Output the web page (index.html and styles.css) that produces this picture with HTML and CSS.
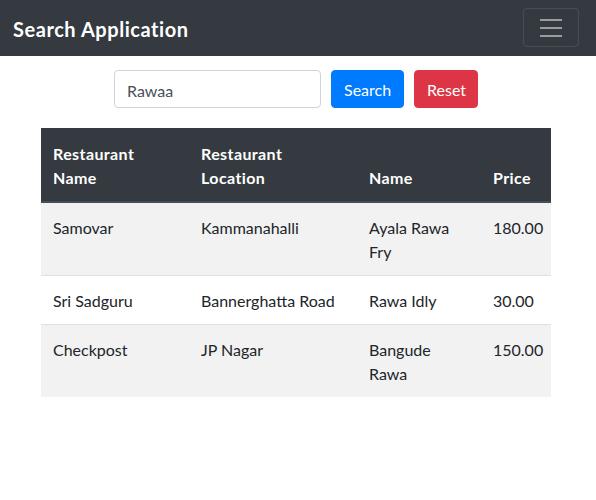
FILE: index.html
```html
<!DOCTYPE html>
<html>
<head>
<meta charset="utf-8">
<link rel="stylesheet" href="styles.css">
</head>
<body>
<nav class="navbar">
  <span class="brand">Search Application</span>
  <button class="toggler" type="button" aria-label="Toggle navigation">
    <svg width="30" height="30" viewBox="0 0 30 30"><path stroke="rgba(255,255,255,0.5)" stroke-width="2" stroke-linecap="butt" d="M4 7h22M4 15h22M4 23h22"/></svg>
  </button>
</nav>
<main class="content">
  <form class="search-form">
    <input class="search-input" type="text" value="Rawaa">
    <button class="btn btn-primary" type="button">Search</button>
    <button class="btn btn-danger" type="button">Reset</button>
  </form>
  <table class="results">
    <colgroup>
      <col class="c1"><col class="c2"><col class="c3"><col class="c4">
    </colgroup>
    <thead>
      <tr><th>Restaurant Name</th><th>Restaurant Location</th><th>Name</th><th>Price</th></tr>
    </thead>
    <tbody>
      <tr><td>Samovar</td><td>Kammanahalli</td><td>Ayala Rawa Fry</td><td>180.00</td></tr>
      <tr><td>Sri Sadguru</td><td>Bannerghatta Road</td><td>Rawa Idly</td><td>30.00</td></tr>
      <tr><td>Checkpost</td><td>JP Nagar</td><td>Bangude Rawa</td><td>150.00</td></tr>
    </tbody>
  </table>
</main>
</body>
</html>
```
FILE: styles.css
```css
* { box-sizing: border-box; }
body {
  margin: 0;
  font-family: Lato, "Open Sans", sans-serif;
  font-size: 16px;
  line-height: 1.5;
  color: #212529;
  background: #fff;
}
.navbar {
  height: 56px;
  background: #343a40;
  display: flex;
  align-items: center;
  justify-content: space-between;
  padding: 0 17px 0 13px;
}
.brand {
  color: #fff;
  font-size: 20px;
  font-weight: 700;
  line-height: 30px;
  letter-spacing: 0.55px;
  margin-top: 2px;
}
.toggler {
  width: 56px;
  height: 39px;
  margin-top: -1px;
  background: transparent;
  border: 1px solid rgba(255,255,255,0.1);
  border-radius: 4px;
  padding: 0;
  display: flex;
  align-items: center;
  justify-content: center;
}
.toggler svg { display: block; }
.content { width: 592px; }
.search-form {
  display: flex;
  justify-content: center;
  gap: 10px;
  margin: 14px 0 20px;
}
.search-input {
  width: 207px;
  height: 38px;
  padding: 7px 12px 5px;
  border: 1px solid #ced4da;
  border-radius: 4px;
  font: inherit;
  color: #495057;
}
.btn {
  height: 38px;
  padding: 7px 12px 5px;
  border: 1px solid transparent;
  border-radius: 4px;
  font: inherit;
  color: #fff;
}
.btn-primary { background: #007bff; border-color: #007bff; width: 73px; }
.btn-danger { background: #dc3545; border-color: #dc3545; width: 64px; }
.results {
  margin-left: 41px;
  width: 510px;
  border-collapse: collapse;
  table-layout: fixed;
}
.c1 { width: 148px; }
.c2 { width: 168px; }
.c3 { width: 124px; }
.c4 { width: 70px; }
.results th, .results td {
  padding: 13px 12px 11px;
  text-align: left;
  vertical-align: top;
}
.results thead th {
  padding: 14px 12px 11px;
  background: #343a40;
  color: #fff;
  font-weight: 700;
  letter-spacing: 0.4px;
  vertical-align: bottom;
  border-bottom: 2px solid #454d55;
}
.results td { border-top: 1px solid #dee2e6; }
.results tbody tr:first-child td { border-top: none; }
.results tbody tr:nth-child(odd) { background: #f2f2f2; }
```
